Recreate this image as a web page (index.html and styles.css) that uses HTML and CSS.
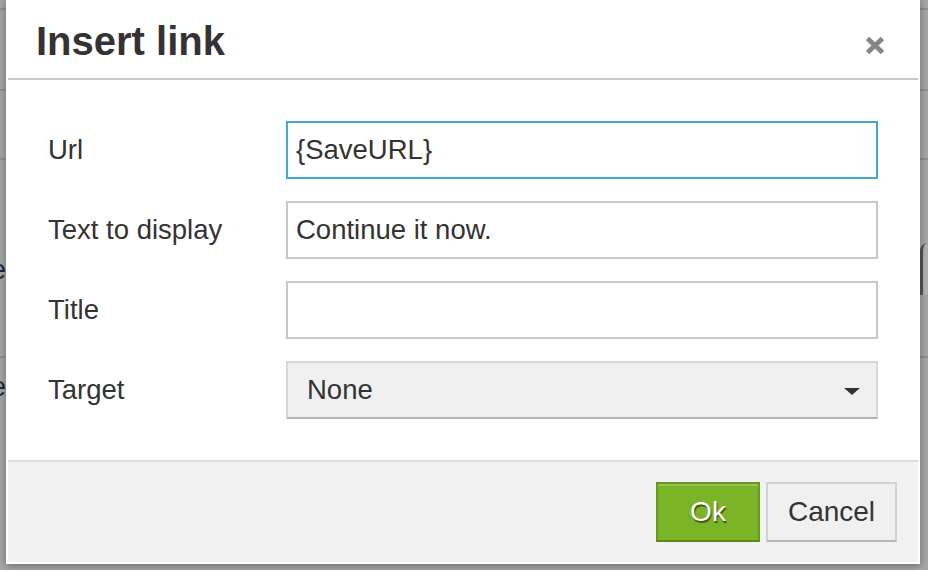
FILE: index.html
```html
<!DOCTYPE html>
<html>
<head>
<meta charset="utf-8">
<link rel="stylesheet" href="styles.css">
</head>
<body>
<div class="backdrop">
  <div class="bg-row r1"></div>
  <div class="bg-row r2"></div>
  <div class="bg-row r3"></div>
  <div class="bg-row r4"><span class="bg-text t1">e</span><span class="bg-icon"></span></div>
  <div class="bg-row r5"><span class="bg-text t2">e</span></div>
</div>

<div class="dialog">
  <div class="dlg-head">
    <h1 class="dlg-title">Insert link</h1>
    <svg class="dlg-close" width="20" height="19" viewBox="0 0 20 19">
      <path d="M2.5 2.5 L17.5 16.5 M17.5 2.5 L2.5 16.5" stroke="#858585" stroke-width="4.8" fill="none"/>
    </svg>
  </div>
  <div class="dlg-body">
    <div class="form-row">
      <label class="form-label">Url</label>
      <div class="textbox focused">{SaveURL}</div>
    </div>
    <div class="form-row">
      <label class="form-label">Text to display</label>
      <div class="textbox">Continue it now.</div>
    </div>
    <div class="form-row">
      <label class="form-label">Title</label>
      <div class="textbox"></div>
    </div>
    <div class="form-row">
      <label class="form-label">Target</label>
      <div class="selectbox"><span>None</span><span class="caret"></span></div>
    </div>
  </div>
  <div class="dlg-foot">
    <button class="btn btn-primary">Ok</button>
    <button class="btn btn-default">Cancel</button>
  </div>
</div>
</body>
</html>
```

FILE: styles.css
```css
html, body {
  margin: 0;
  padding: 0;
}
body {
  width: 928px;
  height: 570px;
  overflow: hidden;
  position: relative;
  background: #a6a6a6;
  font-family: "Liberation Sans", Arial, Helvetica, sans-serif;
  color: #333;
}

.backdrop {
  display: flex;
  flex-direction: column;
  height: 570px;
}
.bg-row {
  border-bottom: 2px solid #8f8f8f;
  position: relative;
  box-sizing: border-box;
}
.r1 { height: 10px; }
.r2 { height: 81px; }
.r3 { height: 69px; }
.r4 { height: 198px; }
.r5 { flex: 1; border-bottom: none; }

.bg-text {
  display: block;
  font-size: 27px;
  color: #1d2a3a;
  margin-left: -9px;
  line-height: 30px;
}
.t1 { padding-top: 95px; }
.t2 { padding-top: 14px; }
.bg-icon {
  position: absolute;
  right: 0;
  top: 83px;
  width: 8px;
  height: 52px;
  background: #b1b1b1;
  border-left: 3px solid #555;
  border-radius: 14px 0 0 0;
  box-sizing: border-box;
}

.dialog {
  position: absolute;
  left: 6px;
  top: -2px;
  width: 914px;
  border: 2px solid #fff;
  box-sizing: border-box;
  background: #fff;
  box-shadow: 0 2px 8px rgba(0, 0, 0, 0.35);
}

.dlg-head {
  height: 80px;
  box-sizing: border-box;
  padding: 21px 33px 0 28px;
  border-bottom: 2px solid #c8c8c8;
  display: flex;
  justify-content: space-between;
  align-items: flex-start;
}
.dlg-title {
  margin: 0;
  font-size: 40px;
  line-height: 40px;
  font-weight: bold;
  color: #333;
}
.dlg-close {
  margin-top: 15px;
  display: block;
}

.dlg-body {
  padding: 41px 40px 41px 40px;
  display: flex;
  flex-direction: column;
  gap: 22px;
}
.form-row {
  display: flex;
  align-items: center;
  height: 58px;
}
.form-label {
  width: 238px;
  flex: none;
  font-size: 27.5px;
  color: #333;
}
.textbox {
  flex: 1;
  height: 58px;
  box-sizing: border-box;
  border: 2px solid #c8c8c8;
  background: #fff;
  padding: 0 8px;
  font-size: 27.5px;
  line-height: 54px;
  color: #333;
  white-space: nowrap;
}
.textbox.focused {
  border-color: #42a8d3;
}
.selectbox {
  flex: 1;
  height: 58px;
  box-sizing: border-box;
  border: 2px solid #d6d6d6;
  border-bottom-color: #b3b3b3;
  background: #f0f0f0;
  padding: 0 16px 0 19px;
  font-size: 27.5px;
  color: #333;
  display: flex;
  align-items: center;
  justify-content: space-between;
}
.caret {
  width: 0;
  height: 0;
  border-left: 8px solid transparent;
  border-right: 8px solid transparent;
  border-top: 7px solid #333;
  margin-top: 2px;
}

.dlg-foot {
  border-top: 2px solid #dcdcdc;
  background: #f2f2f2;
  height: 102px;
  box-sizing: border-box;
  padding: 20px 21px 0 0;
  display: flex;
  justify-content: flex-end;
  align-items: flex-start;
  gap: 6px;
}
.btn {
  height: 60px;
  box-sizing: border-box;
  font-family: "Liberation Sans", Arial, Helvetica, sans-serif;
  font-size: 28px;
  padding: 0;
  margin: 0;
  cursor: pointer;
}
.btn-primary {
  width: 104px;
  background: #7cb427;
  border: 2px solid #679a1c;
  border-bottom-color: #5a8a16;
  box-shadow: inset 0 2px 0 #95c44e;
  color: #fff;
  text-shadow: 1px 2px 1px rgba(0, 0, 0, 0.55);
}
.btn-default {
  width: 131px;
  background: #f0f0f0;
  border: 2px solid #d2d2d2;
  border-bottom-color: #b8b8b8;
  color: #333;
}
```
